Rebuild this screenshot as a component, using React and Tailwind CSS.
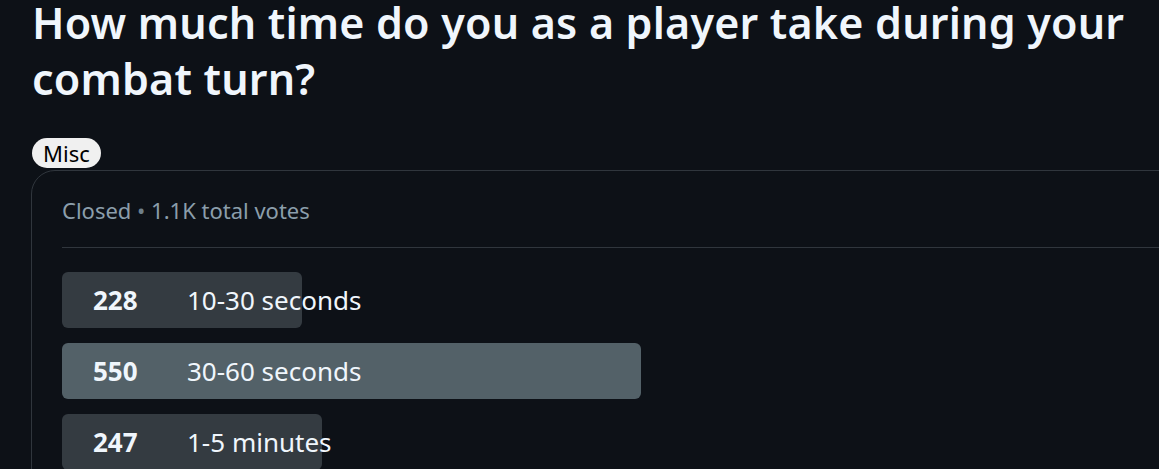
import React from "react";

const options = [
  { votes: 228, label: "10-30 seconds", width: 240, top: false },
  { votes: 550, label: "30-60 seconds", width: 579, top: true },
  { votes: 247, label: "1-5 minutes", width: 260, top: false },
];

export default function App() {
  return (
    <div
      className="w-[1159px] h-[469px] overflow-hidden bg-[#0d1117] text-[#f0f6fc]"
      style={{ fontFamily: '"Noto Sans", "Open Sans", sans-serif' }}
    >
      <div className="pl-8">
        <h1 className="text-[43px] leading-[56px] font-semibold tracking-[0.2px] pt-0 -mt-[5px] w-[1125px]">
          How much time do you as a player take during your combat turn?
        </h1>
        <div className="mt-[31px] flex">
          <span className="inline-flex items-center h-[30px] px-[11px] rounded-full bg-[#f0f0f0] text-black text-[22px] leading-none">
            Misc
          </span>
        </div>
        <div className="mt-[2px] -ml-px w-[1200px] rounded-tl-[24px] border border-[#30363d] pl-[30px] pt-[24px] pb-10">
          <div className="text-[22px] leading-[30px] text-[#8b9eab]">
            Closed <span className="text-[#6e7f8a]">•</span> 1.1K total votes
          </div>
          <div className="mt-[22px] h-px bg-[#30363d]" />
          <div className="mt-[24px] flex flex-col gap-[15px]">
            {options.map((o) => (
              <div key={o.label} className="relative h-[56px]">
                <div
                  className={`absolute left-0 top-0 h-full rounded-[6px] ${o.top ? "bg-[#536168]" : "bg-[#343b41]"}`}
                  style={{ width: o.width }}
                />
                <div className="relative flex items-center h-full text-[26px]">
                  <span className="w-[125px] pl-[31px] font-bold">{o.votes}</span>
                  <span>{o.label}</span>
                </div>
              </div>
            ))}
          </div>
        </div>
      </div>
    </div>
  );
}
